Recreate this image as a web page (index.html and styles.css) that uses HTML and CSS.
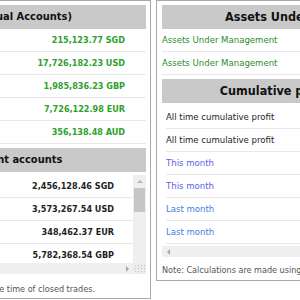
FILE: index.html
```html
<!DOCTYPE html>
<html>
<head>
<meta charset="utf-8">
<link rel="stylesheet" href="styles.css">
</head>
<body>
<div class="page">
  <section class="panel panel-left">
    <h2 class="hd">Balance (Individual Accounts)</h2>
    <div class="rows">
      <div class="row num green">215,123.77 SGD</div>
      <div class="row num green">17,726,182.23 USD</div>
      <div class="row num green">1,985,836.23 GBP</div>
      <div class="row num green">7,726,122.98 EUR</div>
      <div class="row num green">356,138.48 AUD</div>
    </div>
    <h2 class="hd hd-gap">Total investment accounts</h2>
    <div class="scrollbox sb-left">
      <div class="sc-content">
        <div class="row num dark">2,456,128.46 SGD</div>
        <div class="row num dark">3,573,267.54 USD</div>
        <div class="row num dark">348,462.37 EUR</div>
        <div class="row num dark">5,782,368.54 GBP</div>
        <div class="row num dark">1,204,557.10 AUD</div>
      </div>
      <div class="vbar">
        <div class="arrow up"></div>
        <div class="thumb"></div>
        <div class="track"></div>
      </div>
      <div class="hbar">
        <div class="track"></div>
        <div class="arrow right"></div>
      </div>
      <div class="corner"></div>
    </div>
    <p class="note">Balances are updated at the time of closed trades.</p>
  </section>
  <section class="panel panel-right">
    <h2 class="hd">Assets Under Management</h2>
    <div class="rows">
      <div class="row lbl green2">Assets Under Management</div>
      <div class="row lbl green2">Assets Under Management</div>
    </div>
    <h2 class="hd hd-gap">Cumulative profit and losses</h2>
    <div class="scrollbox sb-right">
      <div class="sc-content">
        <div class="row lbl inset dark">All time cumulative profit</div>
        <div class="row lbl inset dark">All time cumulative profit</div>
        <div class="row lbl inset blue1">This month</div>
        <div class="row lbl inset blue1">This month</div>
        <div class="row lbl inset blue2">Last month</div>
        <div class="row lbl inset blue2">Last month</div>
      </div>
      <div class="hbar">
        <div class="arrow left"></div>
        <div class="track"></div>
      </div>
    </div>
    <p class="note">Note: Calculations are made using live exchange rates.</p>
  </section>
</div>
</body>
</html>
```

FILE: styles.css
```css
html, body {
  margin: 0;
  padding: 0;
  background: #ffffff;
}
body {
  font-family: "DejaVu Sans Condensed", "DejaVu Sans", sans-serif;
  font-stretch: condensed;
  color: #222;
  overflow: hidden;
  width: 300px;
  height: 300px;
}
.page {
  display: flex;
  align-items: flex-start;
  gap: 5px;
  margin-left: -173px;
}
.panel {
  flex: none;
  border: 1px solid #a8a8a8;
  background: #fff;
  display: flex;
  flex-direction: column;
}
.panel-left {
  width: 314px;
  padding: 4px 4px 2px 4px;
}
.panel-right {
  width: 297px;
  padding: 4px 5px 3px 5px;
}
.hd {
  margin: 0;
  height: 24px;
  line-height: 24px;
  background: #c9c9c9;
  text-align: center;
  font-size: 11px;
  font-weight: bold;
  color: #111;
  white-space: nowrap;
}
.panel-right .hd {
  font-size: 12.5px;
}
.hd-gap {
  margin-top: 4px;
}
.row {
  height: 22px;
  line-height: 22px;
  border-bottom: 1px solid #e8e8e8;
  white-space: nowrap;
}
.num {
  text-align: right;
  font-size: 9px;
  font-weight: bold;
  padding-right: 21px;
}
.lbl {
  font-size: 9.5px;
}
.inset {
  margin-left: 4px;
}
.green { color: #2ea12e; }
.green2 { color: #2b8c2b; }
.dark { color: #1e1e1e; }
.blue1 { color: #5a63e6; }
.blue2 { color: #3f80e4; }

.scrollbox {
  display: grid;
  overflow: hidden;
}
.sb-left {
  grid-template-columns: 1fr 13px;
  grid-template-rows: 88px 11px;
  margin-top: 3px;
}
.sb-left .num {
  padding-right: 19px;
}
.sb-right {
  grid-template-columns: 1fr;
  grid-template-rows: auto 11px;
  row-gap: 2px;
  margin-top: 3px;
}
.sc-content {
  overflow: hidden;
}
.vbar {
  display: flex;
  flex-direction: column;
  background: #efefef;
}
.vbar .thumb {
  height: 24px;
  margin: 0 1px;
  background: #c6c6c6;
}
.vbar .track { flex: 1; }
.hbar {
  display: flex;
  background: #efefef;
}
.hbar .track { flex: 1; }
.arrow {
  flex: none;
  display: flex;
  align-items: center;
  justify-content: center;
}
.arrow.up {
  height: 13px;
}
.arrow.up::before {
  content: "";
  border-left: 3px solid transparent;
  border-right: 3px solid transparent;
  border-bottom: 3px solid #b5b5b5;
}
.arrow.right, .arrow.left {
  width: 12px;
}
.arrow.right::before {
  content: "";
  border-top: 3px solid transparent;
  border-bottom: 3px solid transparent;
  border-left: 3px solid #a8a8a8;
}
.arrow.left::before {
  content: "";
  border-top: 3px solid transparent;
  border-bottom: 3px solid transparent;
  border-right: 3px solid #a8a8a8;
}
.corner {
  background-color: #ececec;
  background-image: radial-gradient(circle, #c4c4c4 0.8px, transparent 1px);
  background-size: 3px 3px;
  background-position: 1px 1px;
}
.note {
  margin: 0;
  line-height: 14px;
  font-size: 9px;
  color: #555;
  white-space: nowrap;
}
.panel-left .note {
  margin-top: 8px;
  text-align: right;
  padding-right: 51px;
}
.panel-right .note {
  margin-top: 6px;
}
```
